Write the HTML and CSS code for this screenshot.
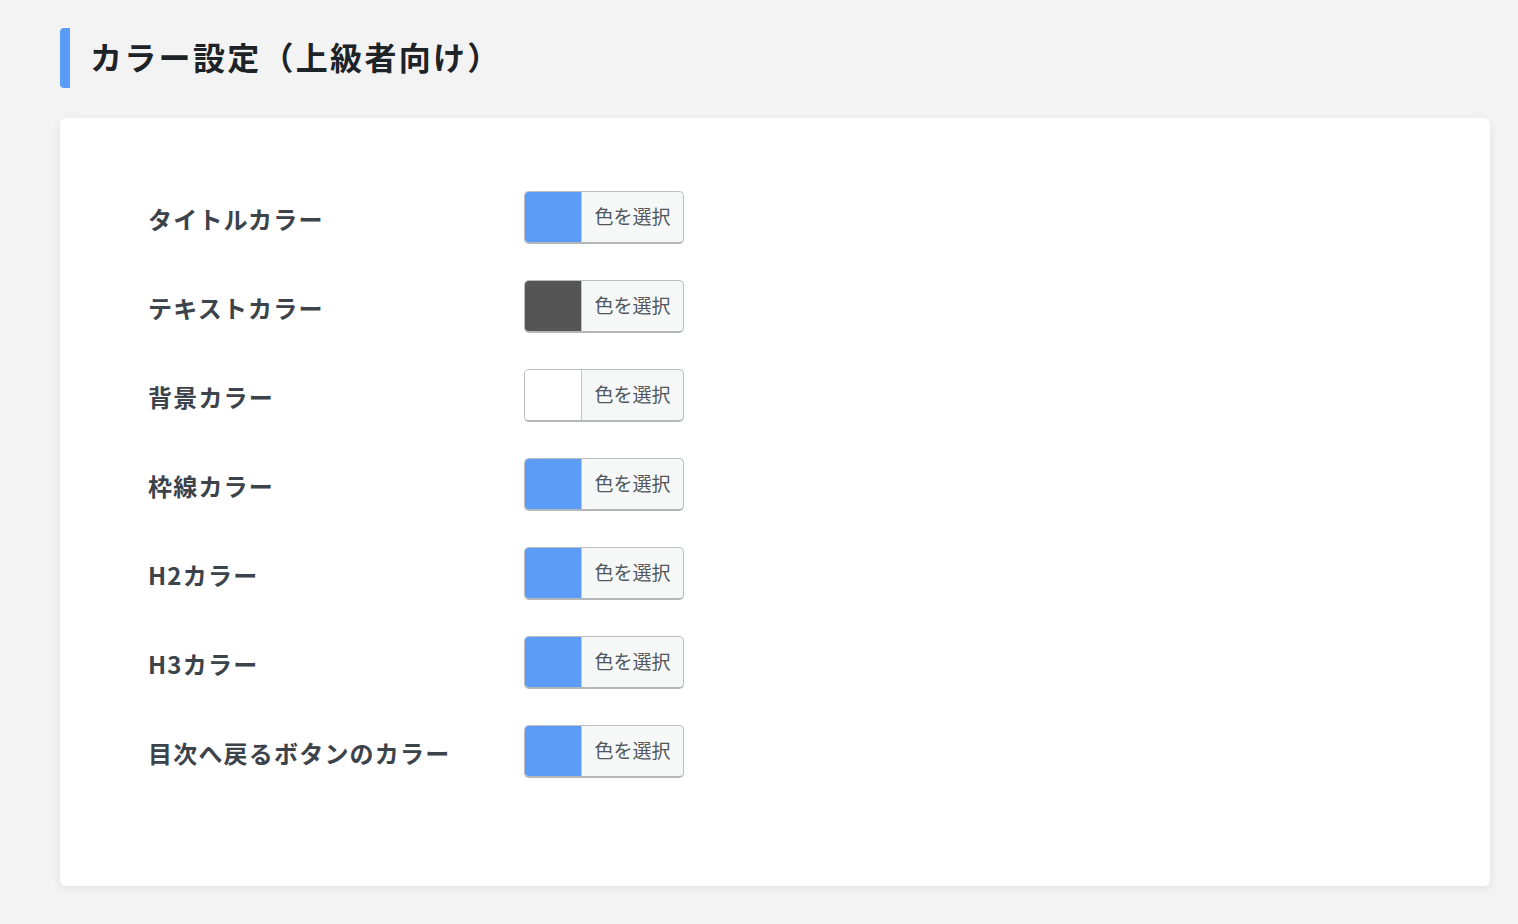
FILE: index.html
```html
<!DOCTYPE html>
<html lang="ja">
<head>
<meta charset="utf-8">
<title>カラー設定</title>
<link rel="stylesheet" href="styles.css">
</head>
<body>
<div class="page">
  <h1 class="heading">カラー設定（上級者向け）</h1>
  <div class="card">
    <div class="rows">
      <div class="label">タイトルカラー</div>
      <button class="picker"><span class="swatch blue"></span><span class="pick-text">色を選択</span></button>
      <div class="label">テキストカラー</div>
      <button class="picker"><span class="swatch dark"></span><span class="pick-text">色を選択</span></button>
      <div class="label">背景カラー</div>
      <button class="picker"><span class="swatch white"></span><span class="pick-text">色を選択</span></button>
      <div class="label">枠線カラー</div>
      <button class="picker"><span class="swatch blue"></span><span class="pick-text">色を選択</span></button>
      <div class="label">H2カラー</div>
      <button class="picker"><span class="swatch blue"></span><span class="pick-text">色を選択</span></button>
      <div class="label">H3カラー</div>
      <button class="picker"><span class="swatch blue"></span><span class="pick-text">色を選択</span></button>
      <div class="label">目次へ戻るボタンのカラー</div>
      <button class="picker"><span class="swatch blue"></span><span class="pick-text">色を選択</span></button>
    </div>
  </div>
</div>
</body>
</html>
```

FILE: styles.css
```css
html, body {
  margin: 0;
  padding: 0;
  background: #f3f3f3;
}
body {
  font-family: "Noto Sans CJK JP", "Noto Sans", sans-serif;
  color: #3c434a;
}
.page {
  padding: 28px 28px 38px 60px;
}
.heading {
  margin: 0;
  border-left: 10px solid #5a9cf8;
  border-radius: 4px 0 0 4px;
  padding-left: 20px;
  padding-bottom: 5px;
  height: 60px;
  box-sizing: border-box;
  display: flex;
  align-items: center;
  font-size: 32px;
  font-weight: 700;
  letter-spacing: 2.3px;
  color: #1d2327;
}
.card {
  margin-top: 30px;
  background: #ffffff;
  border-radius: 6px;
  box-shadow: 0 2px 10px rgba(0, 0, 0, 0.08);
  padding: 55px 88px 90px 88px;
  height: 768px;
  box-sizing: border-box;
}
.rows {
  display: grid;
  grid-template-columns: 376px auto;
  grid-auto-rows: 89px;
  align-items: center;
  justify-items: start;
}
.label {
  font-size: 24px;
  font-weight: 700;
  letter-spacing: 1.2px;
  color: #3c434a;
  padding-top: 2px;
}
.picker {
  display: flex;
  align-items: stretch;
  width: 160px;
  height: 53px;
  padding: 0;
  margin: 0;
  border: 1px solid #bcbdc0;
  border-bottom: 2px solid #b5b6b9;
  border-radius: 5px;
  background: #f6f7f7;
  overflow: hidden;
  font-family: inherit;
  cursor: pointer;
}
.swatch {
  width: 56px;
  flex: none;
  border-right: 1px solid #c3c4c7;
}
.swatch.blue { background: #5a9cf8; }
.swatch.dark { background: #555555; }
.swatch.white { background: #ffffff; }
.pick-text {
  flex: 1;
  display: flex;
  align-items: center;
  justify-content: center;
  font-size: 19px;
  color: #50575e;
  padding-bottom: 3px;
}
```
